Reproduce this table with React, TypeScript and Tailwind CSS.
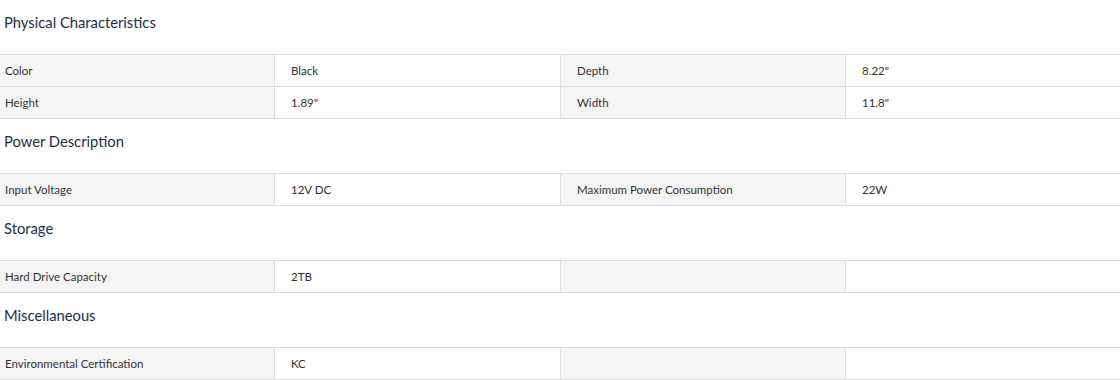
const sections: { title: string; rows: [string, string, string, string][] }[] = [
  {
    title: 'Physical Characteristics',
    rows: [
      ['Color', 'Black', 'Depth', '8.22"'],
      ['Height', '1.89"', 'Width', '11.8"'],
    ],
  },
  {
    title: 'Power Description',
    rows: [['Input Voltage', '12V DC', 'Maximum Power Consumption', '22W']],
  },
  {
    title: 'Storage',
    rows: [['Hard Drive Capacity', '2TB', '', '']],
  },
  {
    title: 'Miscellaneous',
    rows: [['Environmental Certification', 'KC', '', '']],
  },
];

function SpecRow({ row }: { row: [string, string, string, string] }) {
  return (
    <div className="grid grid-cols-[275px_286px_285px_1fr] h-[32px] border-b border-[#dddddd] text-[11.5px] text-[#333333]">
      <div className="flex items-center pl-[5px] bg-[#f5f5f5] border-r border-[#dddddd]">{row[0]}</div>
      <div className="flex items-center pl-4 border-r border-[#dddddd]">{row[1]}</div>
      <div className="flex items-center pl-4 bg-[#f5f5f5] border-r border-[#dddddd]">{row[2]}</div>
      <div className="flex items-center pl-4">{row[3]}</div>
    </div>
  );
}

export default function App() {
  return (
    <div className="w-[1120px] bg-white" style={{ fontFamily: 'Lato, "Open Sans", sans-serif' }}>
      {sections.map((s) => (
        <div key={s.title}>
          <div className="h-[55px] pt-[11px] pl-1 border-b border-[#dddddd]">
            <h3 className="text-[14.75px] leading-[22px] text-[#1b2e4b]">{s.title}</h3>
          </div>
          {s.rows.map((r, j) => (
            <SpecRow key={j} row={r} />
          ))}
        </div>
      ))}
    </div>
  );
}
